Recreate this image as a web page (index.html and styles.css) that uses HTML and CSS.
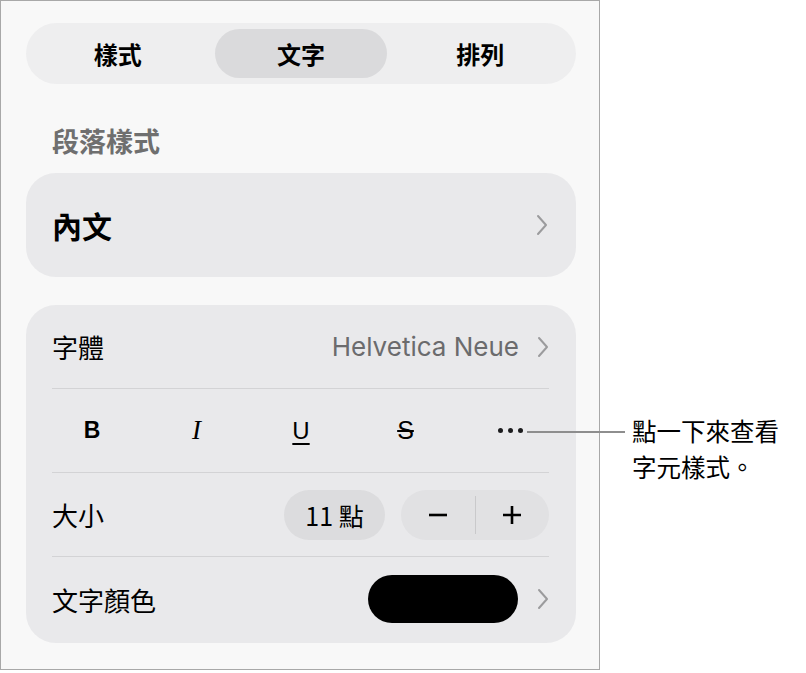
FILE: index.html
```html
<!DOCTYPE html>
<html lang="zh-Hant">
<head>
  <meta charset="UTF-8">
  <title>文字格式</title>
  <link rel="stylesheet" href="styles.css">
</head>
<body>

  <div class="panel">
    <div class="tabs">
      <div class="tab">樣式</div>
      <div class="tab active">文字</div>
      <div class="tab">排列</div>
    </div>

    <div class="section-label">段落樣式</div>

    <div class="card style-card">
      <span>內文</span>
      <svg class="chevron" viewBox="0 0 12 22"><path d="M2 2 L10 11 L2 20"/></svg>
    </div>

    <div class="card list">
      <div class="row">
        <span>字體</span>
        <div class="row-end">
          <span class="value">Helvetica Neue</span>
          <svg class="chevron" viewBox="0 0 12 22"><path d="M2 2 L10 11 L2 20"/></svg>
        </div>
      </div>

      <div class="row format">
        <span class="fmt bold">B</span>
        <span class="fmt italic">I</span>
        <span class="fmt under">U</span>
        <span class="fmt strike">S</span>
        <span class="fmt more"><i></i><i></i><i></i></span>
      </div>

      <div class="row">
        <span>大小</span>
        <div class="row-end">
          <span class="size-pill">11 點</span>
          <div class="stepper">
            <span class="step">
              <svg viewBox="0 0 20 20"><path d="M1 10 H19"/></svg>
            </span>
            <span class="stepper-sep"></span>
            <span class="step">
              <svg viewBox="0 0 20 20"><path d="M1 10 H19 M10 1 V19"/></svg>
            </span>
          </div>
        </div>
      </div>

      <div class="row">
        <span>文字顏色</span>
        <div class="row-end">
          <span class="swatch"></span>
          <svg class="chevron" viewBox="0 0 12 22"><path d="M2 2 L10 11 L2 20"/></svg>
        </div>
      </div>
    </div>
  </div>

  <!-- annotation pointing at the "more" button -->
  <div class="callout">
    <span class="callout-line"></span>
    <p>點一下來查看<br>字元樣式。</p>
  </div>

</body>
</html>
```

FILE: styles.css
```css
/* Reset */
* {
  margin: 0;
  padding: 0;
  box-sizing: border-box;
}

body {
  font-family: "Noto Sans CJK TC", "Noto Sans", sans-serif;
  background-color: #fff;
  color: #000;
  position: relative;
  width: 806px;
  height: 673px;
}

/* Panel */
.panel {
  width: 600px;
  height: 670px;
  border: 1px solid #a8a8a8;
  background-color: #f8f8f8;
  padding: 22px 23px 0 25px;
}

.tabs {
  display: grid;
  grid-template-columns: 1fr 1fr 1fr;
  height: 61px;
  padding: 6px;
  border-radius: 31px;
  background-color: #eeeeef;
}

.tab {
  display: flex;
  align-items: center;
  justify-content: center;
  font-size: 24px;
  font-weight: 700;
  border-radius: 25px;
}

.tab:first-child {
  padding-right: 8px;
}

.tab.active {
  margin: 0 4px;
  background-color: #dadadc;
}

.section-label {
  height: 36px;
  line-height: 36px;
  margin: 39px 0 14px;
  padding-left: 26px;
  font-size: 27px;
  font-weight: 700;
  color: #6f6f6f;
}

/* Cards */
.card {
  background-color: #e9e9eb;
  border-radius: 30px;
}

.style-card {
  height: 104px;
  padding: 0 28px 0 26px;
  display: flex;
  align-items: center;
  justify-content: space-between;
  font-size: 30px;
  font-weight: 700;
  margin-bottom: 28px;
}

.chevron {
  width: 12px;
  height: 22px;
  fill: none;
  stroke: #9b9b9d;
  stroke-width: 2;
  stroke-linecap: round;
  stroke-linejoin: round;
}

.list {
  padding-bottom: 2px;
}

.row {
  height: 84px;
  margin: 0 27px 0 26px;
  display: flex;
  align-items: center;
  justify-content: space-between;
  border-bottom: 1px solid #d3d3d5;
  font-size: 26px;
}

.row:last-child {
  border-bottom: none;
}

.row-end {
  display: flex;
  align-items: center;
}

.value {
  font-family: Inter, "Liberation Sans", sans-serif;
  font-size: 26px;
  color: #6b6b6d;
  margin-right: 18px;
}

/* Bold / italic / underline / strike buttons */
.format {
  padding: 0 26px 0 28px;
}

.fmt {
  width: 24px;
  text-align: center;
  font-family: "Liberation Sans", sans-serif;
  font-size: 23px;
  line-height: 1;
}

.fmt.bold {
  font-weight: 700;
}

.fmt.italic {
  font-family: "Liberation Serif", serif;
  font-style: italic;
  font-size: 27px;
}

.fmt.under {
  font-size: 24px;
  text-decoration: underline;
  text-decoration-thickness: 2px;
  text-underline-offset: 4px;
}

.fmt.strike {
  font-size: 25px;
  text-decoration: line-through;
  text-decoration-thickness: 2px;
}

.fmt.more {
  display: flex;
  justify-content: space-between;
  width: 25px;
}

.fmt.more i {
  width: 5px;
  height: 5px;
  border-radius: 50%;
  background-color: #1c1c1e;
}

/* Size controls */
.size-pill {
  width: 101px;
  height: 50px;
  border-radius: 25px;
  background-color: #dcdcde;
  display: flex;
  align-items: center;
  justify-content: center;
  font-size: 25px;
  margin-right: 16px;
}

.stepper {
  width: 148px;
  height: 50px;
  border-radius: 25px;
  background-color: #e1e1e3;
  display: flex;
  align-items: center;
}

.step {
  flex: 1;
  display: flex;
  justify-content: center;
}

.stepper svg {
  width: 20px;
  height: 20px;
  fill: none;
  stroke: #000;
  stroke-width: 2.6;
}

.stepper-sep {
  width: 1px;
  height: 38px;
  background-color: #c9c9cb;
}

.swatch {
  width: 150px;
  height: 48px;
  border-radius: 24px;
  background-color: #000;
  margin-right: 19px;
}

/* Annotation */
.callout {
  position: absolute;
  left: 527px;
  top: 413px;
  display: flex;
  align-items: flex-start;
}

.callout-line {
  width: 98px;
  height: 2px;
  margin-top: 18px;
  background-color: #8e8e8e;
}

.callout p {
  margin-left: 7px;
  font-size: 24.5px;
  line-height: 36px;
  color: #000;
}
```
